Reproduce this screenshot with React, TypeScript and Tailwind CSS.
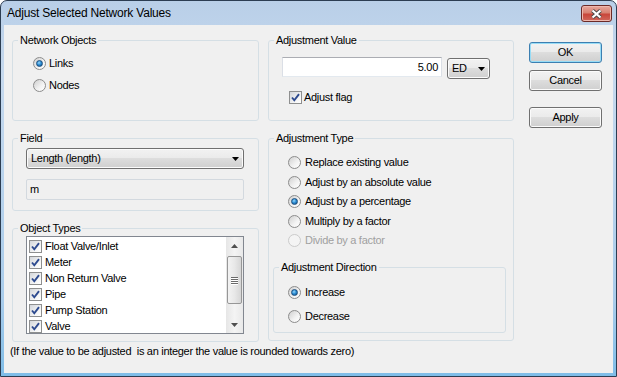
import type { ReactNode } from 'react';

const OBJECT_TYPES = ['Float Valve/Inlet', 'Meter', 'Non Return Valve', 'Pipe', 'Pump Station', 'Valve'];

const ADJUST_TYPES = [
  { label: 'Replace existing value' },
  { label: 'Adjust by an absolute value' },
  { label: 'Adjust by a percentage', checked: true },
  { label: 'Multiply by a factor' },
  { label: 'Divide by a factor', disabled: true },
];

function Radio({ checked, disabled }: { checked?: boolean; disabled?: boolean }) {
  return (
    <span
      className={`flex h-[13px] w-[13px] shrink-0 items-center justify-center rounded-full border ${
        disabled
          ? 'border-[#cbcbcb] bg-[#f4f4f4]'
          : 'border-[#8c8c8c] bg-[linear-gradient(135deg,#cfcfcf,#f3f3f3_60%,#ffffff)]'
      }`}
    >
      {checked && (
        <span className="h-[7px] w-[7px] rounded-full border border-[#1d4f7e] bg-[radial-gradient(circle_at_40%_35%,#9ad8fa_0%,#2d8fd6_45%,#0b4a85_100%)]" />
      )}
    </span>
  );
}

function Check() {
  return (
    <span className="flex h-[13px] w-[13px] shrink-0 items-center justify-center border border-[#8e8f8f] bg-[linear-gradient(135deg,#d3d6db,#f7f7f7_70%,#ffffff)]">
      <svg width="11" height="11" viewBox="0 0 11 11">
        <path d="M2 5.5 L4.3 8.3 L9 2.2" fill="none" stroke="#2d4a8f" strokeWidth="1.9" />
      </svg>
    </span>
  );
}

function Group({ title, className, children }: { title: string; className?: string; children?: ReactNode }) {
  return (
    <fieldset className={`rounded-[3px] border border-[#d5dfe5] ${className ?? ''}`}>
      <legend className="ml-[5px] px-[2px] leading-[13px]">{title}</legend>
      {children}
    </fieldset>
  );
}

function Button({ label, primary, className }: { label: string; primary?: boolean; className?: string }) {
  return (
    <div
      className={`flex h-[21px] w-[73px] items-center justify-center rounded-[3px] border bg-[linear-gradient(#f2f2f2_0%,#ebebeb_45%,#dddddd_50%,#cfcfcf_100%)] ${
        primary ? 'border-[#3c7fb1] shadow-[inset_0_0_0_1px_#97dcf6]' : 'border-[#707070] shadow-[inset_0_0_0_1px_#fbfbfb]'
      } ${className ?? ''}`}
    >
      {label}
    </div>
  );
}

function Arrow({ color = '#000', up }: { color?: string; up?: boolean }) {
  return (
    <svg width="7" height="4" viewBox="0 0 7 4">
      <polygon points={up ? '0,4 7,4 3.5,0' : '0,0 7,0 3.5,4'} fill={color} />
    </svg>
  );
}

function Combo({ text, className }: { text: string; className?: string }) {
  return (
    <div
      className={`flex items-center justify-between rounded-[3px] border border-[#707070] bg-[linear-gradient(#f2f2f2_0%,#ebebeb_45%,#dddddd_50%,#cfcfcf_100%)] pl-[4px] pr-[4px] shadow-[inset_0_0_0_1px_#fbfbfb] ${className ?? ''}`}
    >
      <span>{text}</span>
      <Arrow />
    </div>
  );
}

function Scrollbar() {
  return (
    <div className="flex w-[17px] flex-col bg-[linear-gradient(90deg,#e6e6e6,#f4f4f4_50%,#e9e9e9)]">
      <div className="flex h-[17px] items-center justify-center">
        <Arrow up color="#505050" />
      </div>
      <div className="flex-1 px-[1px] pt-[2px]">
        <div className="flex h-[48px] flex-col items-center justify-center gap-[1px] rounded-[2px] border border-[#979797] bg-[linear-gradient(90deg,#f3f3f3,#e8e8e8_50%,#d6d6d6)]">
          {[0, 1, 2, 3].map((i) => (
            <span key={i} className="h-[1px] w-[7px] bg-[#6a6a6a] shadow-[0_1px_0_#ffffff]" />
          ))}
        </div>
      </div>
      <div className="flex h-[17px] items-center justify-center">
        <Arrow color="#505050" />
      </div>
    </div>
  );
}

export default function App() {
  return (
    <div className="flex h-[377px] w-[617px] flex-col overflow-hidden rounded-t-[7px] border border-[#2c3d52] bg-[linear-gradient(#b9cfe8,#c6d9ee_20%,#a9cceb_80%,#7fbde8)] px-[3px] pb-[3px] font-['Liberation_Sans',Arial,sans-serif] text-[11px] tracking-[-0.3px] text-black">
      {/* Title bar */}
      <div className="flex h-[24px] items-start justify-between">
        <span className="pl-[3px] pt-[5px] text-[12px] leading-[14px] tracking-[-0.2px]">Adjust Selected Network Values</span>
        <div className="mr-[1px] mt-[4px] flex h-[17px] w-[31px] items-center justify-center rounded-[3px] border border-[#6b2a27] bg-[linear-gradient(#e7a89d_0%,#d88272_45%,#c9463a_55%,#d0685c_100%)] shadow-[inset_0_0_0_1px_#eeb8ae]">
          <svg width="13" height="10" viewBox="0 0 13 10">
            <path d="M2.5 1.5 L10.5 8.5 M10.5 1.5 L2.5 8.5" stroke="#4a4a4a" strokeWidth="4" />
            <path d="M2.5 1.5 L10.5 8.5 M10.5 1.5 L2.5 8.5" stroke="#ffffff" strokeWidth="2.2" />
          </svg>
        </div>
      </div>

      {/* Client area */}
      <div className="flex flex-1 flex-col bg-[#f0f0f0]">
        <div className="flex pl-[8px] pt-[9px]">
          {/* Left column */}
          <div className="flex w-[247px] flex-col gap-[11px]">
            <Group title="Network Objects" className="h-[87px]">
              <div className="flex flex-col gap-[9px] pl-[20px] pt-[10px]">
                <label className="flex h-[13px] items-center gap-[3px]">
                  <Radio checked />
                  <span>Links</span>
                </label>
                <label className="flex h-[13px] items-center gap-[3px]">
                  <Radio />
                  <span>Nodes</span>
                </label>
              </div>
            </Group>

            <Group title="Field" className="h-[79px]">
              <div className="flex flex-col gap-[10px] pl-[13px] pt-[3px]">
                <Combo text="Length (length)" className="h-[21px] w-[218px]" />
                <div className="flex h-[21px] w-[218px] items-center rounded-[2px] border border-[#d3d9df] pl-[3px]">m</div>
              </div>
            </Group>

            <Group title="Object Types" className="h-[120px]">
              <div className="ml-[13px] mt-[1px] flex h-[98px] w-[218px] border border-[#828790] bg-white">
                <div className="flex-1 overflow-hidden pl-[2px] pt-[1px]">
                  {OBJECT_TYPES.map((t) => (
                    <div key={t} className="flex h-[16px] items-center gap-[3px]">
                      <Check />
                      <span>{t}</span>
                    </div>
                  ))}
                </div>
                <Scrollbar />
              </div>
            </Group>
          </div>

          {/* Middle column */}
          <div className="ml-[9px] flex w-[246px] flex-col gap-[11px]">
            <Group title="Adjustment Value" className="h-[87px]">
              <div className="flex flex-col pl-[13px] pt-[10px]">
                <div className="flex items-start gap-[5px]">
                  <div className="flex h-[20px] w-[160px] items-center justify-end border border-[#abadb3] border-x-[#dbdfe6] border-b-[#e3e9ef] bg-white pr-[3px]">
                    5.00
                  </div>
                  <Combo text="ED" className="mt-[1px] h-[21px] w-[43px]" />
                </div>
                <label className="ml-[7px] mt-[12px] flex h-[13px] items-center gap-[2px]">
                  <Check />
                  <span>Adjust flag</span>
                </label>
              </div>
            </Group>

            <Group title="Adjustment Type" className="h-[209px]">
              <div className="flex flex-col gap-[6.5px] pl-[19px] pt-[11px]">
                {ADJUST_TYPES.map((a) => (
                  <label key={a.label} className={`flex h-[13px] items-center gap-[4px] ${a.disabled ? 'text-[#a0a0a0]' : ''}`}>
                    <Radio checked={a.checked} disabled={a.disabled} />
                    <span>{a.label}</span>
                  </label>
                ))}
              </div>
              <Group title="Adjustment Direction" className="ml-[4px] mt-[14px] h-[72px] w-[233px]">
                <div className="flex flex-col gap-[11px] pl-[14px] pt-[12px]">
                  <label className="flex h-[13px] items-center gap-[4px]">
                    <Radio checked />
                    <span>Increase</span>
                  </label>
                  <label className="flex h-[13px] items-center gap-[4px]">
                    <Radio />
                    <span>Decrease</span>
                  </label>
                </div>
              </Group>
            </Group>
          </div>

          {/* Buttons */}
          <div className="ml-[15px] flex flex-col pt-[8px]">
            <Button label="OK" primary />
            <Button label="Cancel" className="mt-[7px]" />
            <Button label="Apply" className="mt-[16px]" />
          </div>
        </div>

        <p className="mt-[3px] whitespace-pre pl-[6px] leading-[13px]">
          (If the value to be adjusted  is an integer the value is rounded towards zero)
        </p>
      </div>
    </div>
  );
}
